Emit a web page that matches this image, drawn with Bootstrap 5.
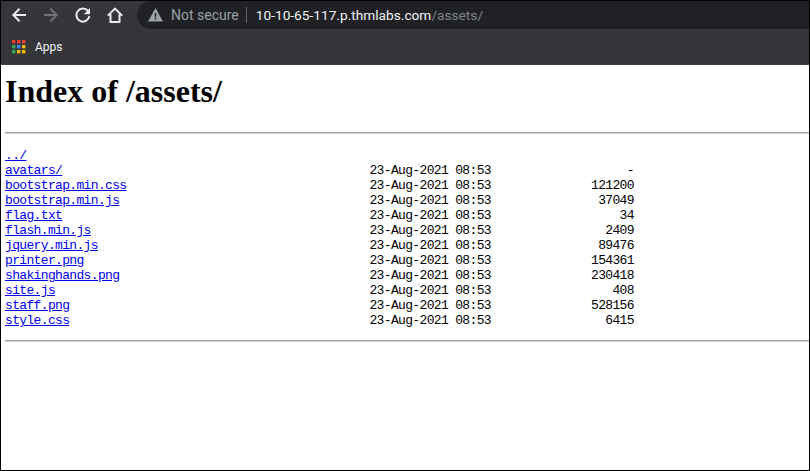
<!DOCTYPE html>
<html lang="en">
<head>
<meta charset="utf-8">
<title>Index of /assets/</title>
<link href="https://cdn.jsdelivr.net/npm/bootstrap@5.3.0/dist/css/bootstrap.min.css" rel="stylesheet">
<style>
html,body{height:471px;overflow:hidden}
body{background:#fff;color:#000}
.frame{height:471px;border:1px solid #000;border-top:0;display:flex;flex-direction:column;overflow:hidden}
.topbar{height:29px;background:#35363a;border-top:1px solid #000;padding-left:2px}
.tool{width:32px;height:28px;display:flex;align-items:center;justify-content:center;flex:none}
.omni{height:28px;background:#202124;margin-left:6px;border-radius:14px 0 0 14px;font:14px "Roboto",sans-serif;padding-left:11px;flex:1;color:#9aa0a6}
.omni .warn{margin-right:8px}
.sep{width:1px;height:16px;background:#5f6368;margin:0 9px 0 7px}
.host{color:#f1f3f4;font-size:13.7px}
.path{color:#80868b;font-size:13.7px}
.marks{height:36px;background:#35363a;padding-left:11px;font:12px "Roboto",sans-serif;color:#f1f3f4;border-bottom:1px solid #3c3d41}
.marks svg{margin-right:9px}
.listing{flex:1;padding:0 0 0 4px;font-family:"Liberation Serif",serif}
.listing h1{font:bold 32px/37px "Liberation Serif",serif;margin:8px 0 22px}
.rule{height:1px;border:0;opacity:1;background:#a0a0a0;margin:0;box-shadow:0 1px 0 #d8d8d8}
.listing pre{font-family:"Liberation Mono",monospace;font-size:13px;letter-spacing:-.655px;line-height:15px;margin:15px 0 12px;padding:0;color:#000;overflow:hidden}
.listing pre a{color:#00e;text-decoration:underline}
</style>
</head>
<body>
<div class="frame">
  <div class="topbar d-flex align-items-center">
    <div class="tool"><svg width="16" height="16" viewBox="0 0 16 16" fill="none" stroke="#e8eaed" stroke-width="2"><path d="M15 8H2.5M8.5 1.8 2.3 8l6.2 6.2"/></svg></div>
    <div class="tool"><svg width="16" height="16" viewBox="0 0 16 16" fill="none" stroke="#6f7175" stroke-width="2"><path d="M1 8h12.5M7.5 1.8 13.7 8l-6.2 6.2"/></svg></div>
    <div class="tool"><svg width="16" height="16" viewBox="0 0 16 16" fill="none" stroke="#e8eaed" stroke-width="2"><path d="M13 4a6.5 6.5 0 1 0 1.4 5"/><path d="M15 1v6.2H8.8z" fill="#e8eaed" stroke="none"/></svg></div>
    <div class="tool"><svg width="16" height="16" viewBox="0 0 16 16" fill="none" stroke="#e8eaed" stroke-width="2"><path d="M.8 8.6 8 1.6l7.2 7M3.5 7v8h9V7"/></svg></div>
    <div class="omni d-flex align-items-center">
      <svg class="warn" width="15" height="14" viewBox="0 0 15 14"><path d="M7.5 0 15 13.5H0z" fill="#9aa0a6"/><path d="M6.8 5h1.4v4.2H6.8zM6.8 10h1.4v1.5H6.8z" fill="#202124"/></svg>
      <span>Not secure</span><span class="sep"></span><span class="host">10-10-65-117.p.thmlabs.com</span><span class="path">/assets/</span>
    </div>
  </div>
  <div class="marks d-flex align-items-center">
    <svg width="14" height="14" viewBox="0 0 14 14"><g fill="#ea4335"><rect width="3.4" height="3.4"/><rect x="5" width="3.4" height="3.4"/><rect x="10" width="3.4" height="3.4"/></g><rect y="5" width="3.4" height="3.4" fill="#34a853"/><rect x="5" y="5" width="3.4" height="3.4" fill="#4285f4"/><rect x="10" y="5" width="3.4" height="3.4" fill="#fbbc04"/><rect y="10" width="3.4" height="3.4" fill="#34a853"/><rect x="5" y="10" width="3.4" height="3.4" fill="#fbbc04"/><rect x="10" y="10" width="3.4" height="3.4" fill="#fbbc04"/></svg>
    <span>Apps</span>
  </div>
  <main class="listing">
    <h1>Index of /assets/</h1>
    <hr class="rule">
<pre><a href="#">../</a>
<a href="#">avatars/</a>                                           23-Aug-2021 08:53                   -
<a href="#">bootstrap.min.css</a>                                  23-Aug-2021 08:53              121200
<a href="#">bootstrap.min.js</a>                                   23-Aug-2021 08:53               37049
<a href="#">flag.txt</a>                                           23-Aug-2021 08:53                  34
<a href="#">flash.min.js</a>                                       23-Aug-2021 08:53                2409
<a href="#">jquery.min.js</a>                                      23-Aug-2021 08:53               89476
<a href="#">printer.png</a>                                        23-Aug-2021 08:53              154361
<a href="#">shakinghands.png</a>                                   23-Aug-2021 08:53              230418
<a href="#">site.js</a>                                            23-Aug-2021 08:53                 408
<a href="#">staff.png</a>                                          23-Aug-2021 08:53              528156
<a href="#">style.css</a>                                          23-Aug-2021 08:53                6415
</pre>
    <hr class="rule">
  </main>
</div>
<script src="https://cdn.jsdelivr.net/npm/bootstrap@5.3.0/dist/js/bootstrap.bundle.min.js"></script>
</body>
</html>
